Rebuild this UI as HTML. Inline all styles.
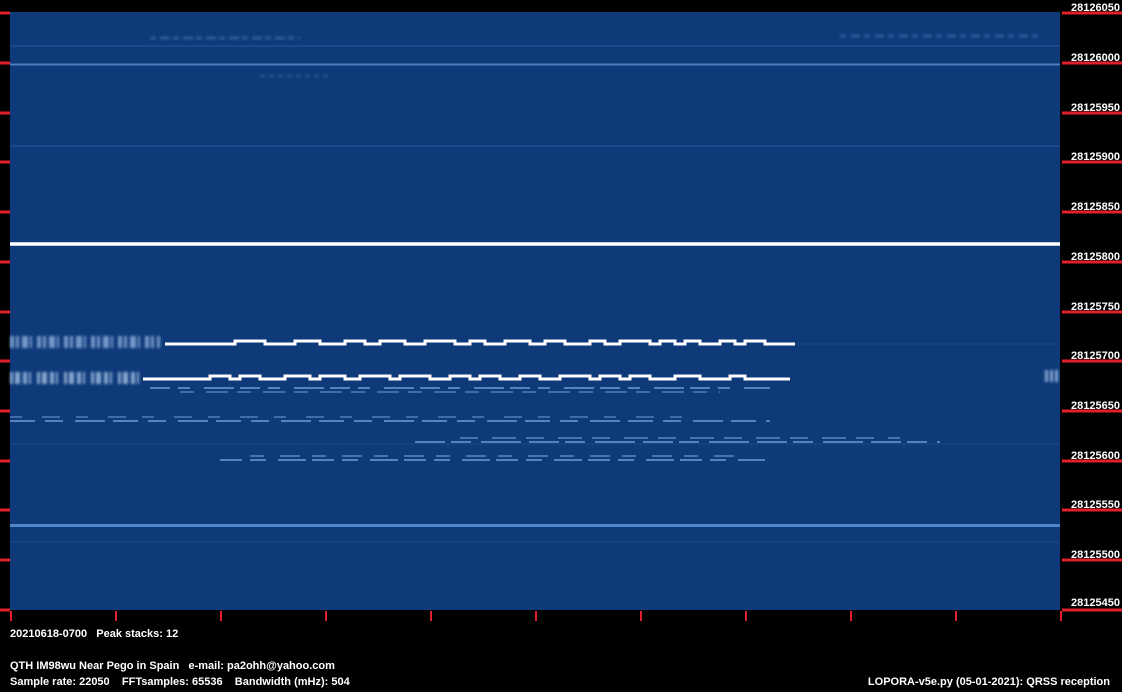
<!DOCTYPE html>
<html><head><meta charset="utf-8"><style>
html,body{margin:0;padding:0;background:#000;width:1122px;height:692px;overflow:hidden}
svg{display:block}
text{font-family:"Liberation Sans",sans-serif;font-weight:bold;font-size:11px;fill:#fff}
</style></head><body>
<svg width="1122" height="692" viewBox="0 0 1122 692">
<defs><filter id="b" x="-5%" y="-50%" width="110%" height="200%"><feGaussianBlur stdDeviation="1.2"/></filter></defs>
<rect width="1122" height="692" fill="#000"/>
<rect x="10" y="12" width="1050" height="598" fill="#0f3a7a"/>
<g fill="none">
<line x1="10" y1="46" x2="1060" y2="46" stroke="#28549a" stroke-width="1"/>
<line x1="10" y1="64.5" x2="1060" y2="64.5" stroke="#4a7cc0" stroke-width="2"/>
<line x1="10" y1="146" x2="1060" y2="146" stroke="#28549a" stroke-width="1"/>
<line x1="10" y1="244" x2="1060" y2="244" stroke="#fff" stroke-width="3.5"/>
<line x1="10" y1="525.5" x2="1060" y2="525.5" stroke="#4f86cc" stroke-width="3"/>
<line x1="10" y1="542" x2="1060" y2="542" stroke="#1f4a8a" stroke-width="1"/>
<line x1="10" y1="444" x2="1060" y2="444" stroke="#1f4a8a" stroke-width="1"/>
<line x1="795" y1="344" x2="1060" y2="344" stroke="#1f4a8a" stroke-width="1"/>
<g filter="url(#b)" opacity="0.7">
<line x1="150" y1="38" x2="300" y2="38" stroke="#3d6aaa" stroke-width="3" stroke-dasharray="6 4 10 3"/>
<line x1="840" y1="36" x2="1040" y2="36" stroke="#3d6aaa" stroke-width="3" stroke-dasharray="6 5 9 4"/>
<line x1="260" y1="76" x2="330" y2="76" stroke="#3d6aaa" stroke-width="2" stroke-dasharray="5 4"/>
<line x1="10" y1="342" x2="160" y2="342" stroke="#9fc0ea" stroke-width="12" stroke-dasharray="4 2 3 3 6 2 2 5"/>
<line x1="10" y1="378" x2="140" y2="378" stroke="#b8d4f2" stroke-width="12" stroke-dasharray="3 2 5 3 4 2 2 6"/>
<line x1="1045" y1="376" x2="1060" y2="376" stroke="#b8d4f2" stroke-width="12" stroke-dasharray="3 2"/>
</g>
<path d="M165 344 H235 V341 H265 V344 H295 V341 H320 V344 H345 V341 H365 V344 H380 V341 H405 V344 H425 V341 H455 V344 H470 V341 H485 V344 H505 V341 H530 V344 H545 V341 H565 V344 H590 V341 H605 V344 H620 V341 H650 V344 H660 V341 H675 V344 H685 V341 H700 V344 H720 V341 H735 V344 H745 V341 H765 V344 H795" stroke="#fff" stroke-width="3"/>
<path d="M143 379 H210 V376 H230 V379 H240 V376 H260 V379 H285 V376 H310 V379 H320 V376 H345 V379 H360 V376 H390 V379 H400 V376 H430 V379 H450 V376 H470 V379 H480 V376 H500 V379 H520 V376 H540 V379 H560 V376 H590 V379 H600 V376 H620 V379 H630 V376 H650 V379 H675 V376 H700 V379 H730 V376 H745 V379 H790" stroke="#fff" stroke-width="3"/>
<g stroke="#6f9ad6" stroke-width="2" opacity="0.75">
<line x1="150" y1="388" x2="770" y2="388" stroke-dasharray="20 8 12 14 30 6"/>
<line x1="180" y1="392" x2="720" y2="392" stroke-dasharray="14 12 22 9" opacity="0.7"/>
<line x1="10" y1="421" x2="770" y2="421" stroke-dasharray="25 10 18 12 30 8"/>
<line x1="10" y1="417" x2="700" y2="417" stroke-dasharray="12 20 18 16" opacity="0.7"/>
<line x1="415" y1="442" x2="940" y2="442" stroke-dasharray="30 6 20 10 40 8"/>
<line x1="460" y1="438" x2="900" y2="438" stroke-dasharray="18 14 24 10" opacity="0.8"/>
<line x1="220" y1="460" x2="765" y2="460" stroke-dasharray="22 8 16 12 28 6"/>
<line x1="250" y1="456" x2="740" y2="456" stroke-dasharray="14 16 20 12" opacity="0.8"/>
</g>
</g>
<g stroke="#e0202a" stroke-width="3">
<line x1="0" y1="13" x2="10" y2="13"/><line x1="0" y1="63" x2="10" y2="63"/><line x1="0" y1="113" x2="10" y2="113"/><line x1="0" y1="162" x2="10" y2="162"/><line x1="0" y1="212" x2="10" y2="212"/><line x1="0" y1="262" x2="10" y2="262"/><line x1="0" y1="312" x2="10" y2="312"/><line x1="0" y1="361" x2="10" y2="361"/><line x1="0" y1="411" x2="10" y2="411"/><line x1="0" y1="461" x2="10" y2="461"/><line x1="0" y1="510" x2="10" y2="510"/><line x1="0" y1="560" x2="10" y2="560"/><line x1="0" y1="610" x2="10" y2="610"/>
<line x1="1062" y1="13" x2="1122" y2="13"/><line x1="1062" y1="63" x2="1122" y2="63"/><line x1="1062" y1="113" x2="1122" y2="113"/><line x1="1062" y1="162" x2="1122" y2="162"/><line x1="1062" y1="212" x2="1122" y2="212"/><line x1="1062" y1="262" x2="1122" y2="262"/><line x1="1062" y1="312" x2="1122" y2="312"/><line x1="1062" y1="361" x2="1122" y2="361"/><line x1="1062" y1="411" x2="1122" y2="411"/><line x1="1062" y1="461" x2="1122" y2="461"/><line x1="1062" y1="510" x2="1122" y2="510"/><line x1="1062" y1="560" x2="1122" y2="560"/><line x1="1062" y1="610" x2="1122" y2="610"/>
</g>
<g stroke="#e0202a" stroke-width="2">
<line x1="11" y1="611" x2="11" y2="621"/><line x1="116" y1="611" x2="116" y2="621"/><line x1="221" y1="611" x2="221" y2="621"/><line x1="326" y1="611" x2="326" y2="621"/><line x1="431" y1="611" x2="431" y2="621"/><line x1="536" y1="611" x2="536" y2="621"/><line x1="641" y1="611" x2="641" y2="621"/><line x1="746" y1="611" x2="746" y2="621"/><line x1="851" y1="611" x2="851" y2="621"/><line x1="956" y1="611" x2="956" y2="621"/><line x1="1061" y1="611" x2="1061" y2="621"/>
</g>
<g text-anchor="end">
<text x="1120" y="11">28126050</text><text x="1120" y="61">28126000</text><text x="1120" y="111">28125950</text><text x="1120" y="160">28125900</text><text x="1120" y="210">28125850</text><text x="1120" y="260">28125800</text><text x="1120" y="310">28125750</text><text x="1120" y="359">28125700</text><text x="1120" y="409">28125650</text><text x="1120" y="459">28125600</text><text x="1120" y="508">28125550</text><text x="1120" y="558">28125500</text><text x="1120" y="606">28125450</text>
</g>
<text x="10" y="637" xml:space="preserve">20210618-0700   Peak stacks: 12</text>
<text x="10" y="669" xml:space="preserve">QTH IM98wu Near Pego in Spain   e-mail: pa2ohh@yahoo.com</text>
<text x="10" y="685" xml:space="preserve">Sample rate: 22050    FFTsamples: 65536    Bandwidth (mHz): 504</text>
<text x="1110" y="685" text-anchor="end">LOPORA-v5e.py (05-01-2021): QRSS reception</text>
</svg>
</body></html>
